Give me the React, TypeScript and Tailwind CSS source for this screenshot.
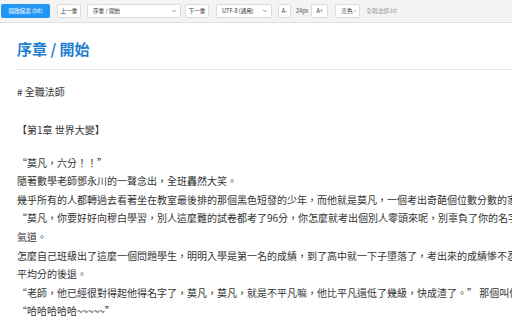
import { ChevronDown } from 'lucide-react'

const LINES = [
  '“莫凡，六分！！”',
  '隨著數學老師鄧永川的一聲念出，全班轟然大笑。',
  '幾乎所有的人都轉過去看著坐在教室最後排的那個黑色短發的少年，而他就是莫凡，一個考出奇葩個位數分數的家夥。',
  '“莫凡，你要好好向穆白學習，別人這麼難的試卷都考了96分，你怎麼就考出個別人零頭來呢，別辜負了你的名字啊，要爭',
  '氣道。',
  '怎麼自己班級出了這麼一個問題學生，明明入學是第一名的成績，到了高中就一下子墮落了，考出來的成績慘不忍睹，拉低了全班的',
  '平均分的後退。',
  '“老師，他已經很對得起他得名字了，莫凡，莫凡，就是不平凡嘛，他比平凡還低了幾級，快成渣了。” 那個叫做趙坤三的',
  '“哈哈哈哈哈~~~~~”',
]

function Btn({ children, w }: { children: string; w: string }) {
  return (
    <div className={`${w} h-[14px] flex items-center justify-center bg-white border border-[#dcdcdc] rounded-[2px] text-[#333]`}>
      {children}
    </div>
  )
}

function Sel({ children, w }: { children: string; w: string }) {
  return (
    <div className={`${w} h-[14px] flex items-center justify-between pl-[5px] pr-[3px] bg-white border border-[#dcdcdc] rounded-[2px] text-[#333]`}>
      <span>{children}</span>
      <ChevronDown size={6} strokeWidth={2.5} className="text-[#555]" />
    </div>
  )
}

export default function App() {
  return (
    <div
      lang="zh-TW"
      className="w-[512px] h-[320px] overflow-hidden bg-white [font-feature-settings:'locl']"
      style={{ fontFamily: '"Noto Sans CJK TC", "Noto Sans CJK JP", sans-serif' }}
    >
      {/* Toolbar */}
      <div className="h-[23px] bg-[#f3f3f3] border-b border-[#e0e0e0] flex items-center pl-[1px] text-[5.6px] whitespace-nowrap">
        <div className="w-[49px] h-[14px] flex items-center justify-center bg-[#2196f3] text-white rounded-[2px]">
          開啟檔案 (txt)
        </div>
        <div className="ml-[7px]"><Btn w="w-[24px]">上一章</Btn></div>
        <div className="ml-[6px]"><Sel w="w-[94px]">序章 / 開始</Sel></div>
        <div className="ml-[4px]"><Btn w="w-[24px]">下一章</Btn></div>
        <div className="ml-[7px]"><Sel w="w-[56px]">UTF-8 (通用)</Sel></div>
        <div className="ml-[6px]"><Btn w="w-[13px]">A-</Btn></div>
        <span className="ml-[5px] text-[#555]">24px</span>
        <div className="ml-[3px]"><Btn w="w-[17px]">A+</Btn></div>
        <div className="ml-[7px]"><Sel w="w-[25px]">亮色</Sel></div>
        <span className="ml-[6px] text-[#999]">全職法師.txt</span>
      </div>

      {/* Reader */}
      <div className="pl-[17px] pt-[16px]">
        <h1 className="text-[15px] leading-[20px] font-bold text-[#1e7fd0]">序章 / 開始</h1>
        <div className="mt-[10px] -ml-[1px] border-t border-[#e6e6e6]" />
        <div className="text-[10px] leading-[18.6px] text-[#333] whitespace-nowrap">
          <p className="mt-[12.7px]"># 全職法師</p>
          <p className="mt-[19.4px]">【第1章 世界大變】</p>
          <div className="mt-[14.4px]">
            {LINES.map((l, i) => (
              <p key={i}>{l}</p>
            ))}
          </div>
        </div>
      </div>
    </div>
  )
}
